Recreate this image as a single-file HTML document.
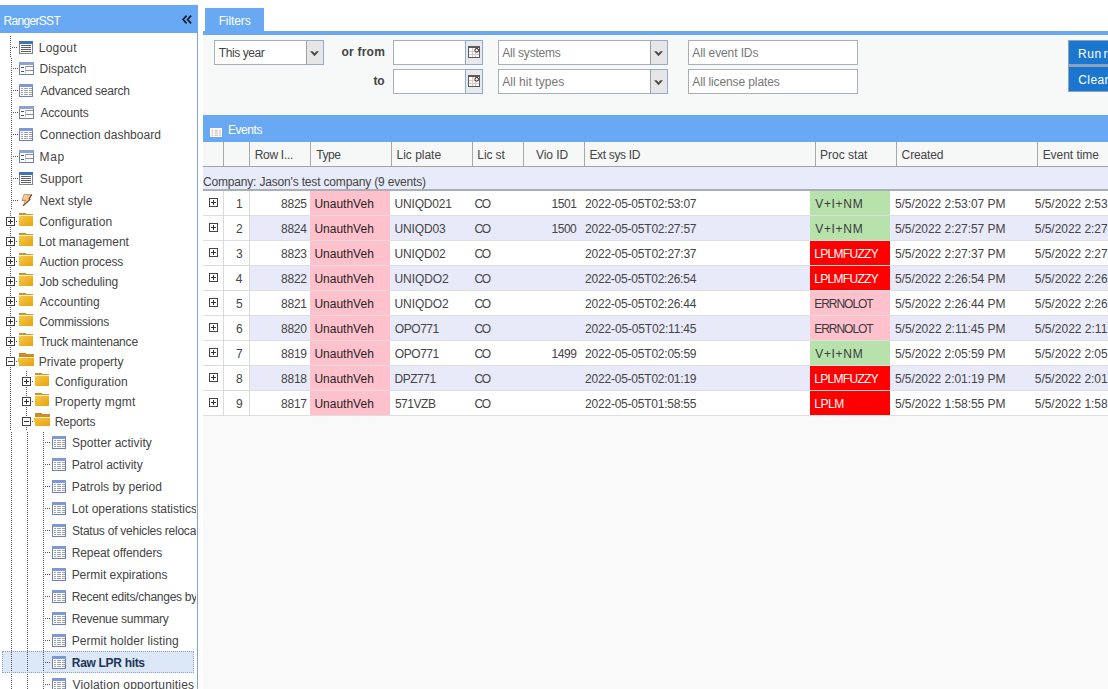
<!DOCTYPE html>
<html><head><meta charset="utf-8"><title>RangerSST</title>
<style>
html,body{margin:0;padding:0;width:1108px;height:689px;overflow:hidden;background:#fff;font-family:"Liberation Sans",sans-serif;}
#root{position:relative;width:1108px;height:689px;overflow:hidden;}
#tree{position:absolute;left:0;top:0;width:196px;height:689px;overflow:hidden;}
</style></head><body><div id="root">
<div style="position:absolute;left:0px;top:5px;width:198px;height:28px;background:#69a9f4"></div><svg style="position:absolute;left:182px;top:15px" width="10" height="9" viewBox="0 0 10 9"><path d="M4.6 0.7L1.1 4.5L4.6 8.3M9.1 0.7L5.6 4.5L9.1 8.3" stroke="#0b1830" stroke-width="1.7" fill="none"/></svg><div style="position:absolute;left:197px;top:33px;width:1px;height:656px;background:#7ea4d8"></div>
<div id="tree"><div style="position:absolute;left:10px;top:36px;width:1px;height:22px;background:repeating-linear-gradient(to bottom,#585858 0 1px,transparent 1px 2px);background-position:0 0px"></div><div style="position:absolute;left:11px;top:58px;width:1px;height:152px;background:repeating-linear-gradient(to bottom,#585858 0 1px,transparent 1px 2px);background-position:0 0px"></div><div style="position:absolute;left:12px;top:47px;width:5px;height:1px;background:repeating-linear-gradient(to right,#585858 0 1px,transparent 1px 2px)"></div><div style="position:absolute;left:19px;top:41px;line-height:0"><svg width="14" height="13" viewBox="0 0 14 13" shape-rendering="crispEdges"><rect x="0.5" y="0.5" width="13" height="12" fill="#fff" stroke="#7b8290"/><rect x="0" y="0" width="14" height="3" fill="#3f74bb"/><path d="M2 4.5h10M2 6.5h10M2 8.5h10M2 10.5h10" stroke="#5e5e5e" stroke-width="1"/></svg></div><div style="position:absolute;left:13px;top:68px;width:5px;height:1px;background:repeating-linear-gradient(to right,#585858 0 1px,transparent 1px 2px)"></div><div style="position:absolute;left:19px;top:62px;line-height:0"><svg width="15" height="13" viewBox="0 0 15 13" shape-rendering="crispEdges"><rect x="0.5" y="0.5" width="14" height="12" fill="#fff" stroke="#6d7fa3"/><rect x="0" y="0" width="15" height="3" fill="#8aa3d4"/><rect x="8" y="5" width="6" height="3" fill="#fdfbee"/><rect x="2" y="5" width="3" height="1" fill="#3f5687"/><rect x="2" y="9" width="3" height="1" fill="#3f5687"/><path d="M6.5 4v7" stroke="#b4bccb"/><path d="M7 4.5h7M7 8.5h7" stroke="#8f949c"/></svg></div><div style="position:absolute;left:13px;top:90px;width:5px;height:1px;background:repeating-linear-gradient(to right,#585858 0 1px,transparent 1px 2px)"></div><div style="position:absolute;left:19px;top:84px;line-height:0"><svg width="14" height="13" viewBox="0 0 14 13" shape-rendering="crispEdges"><rect x="0.5" y="0.5" width="13" height="12" fill="#fff" stroke="#6b7fbf"/><rect x="0" y="0" width="14" height="3" fill="#7c98d8"/><path d="M2 4.5h2M5 4.5h4M10 4.5h3M2 6.5h2M5 6.5h4M10 6.5h3M2 8.5h2M5 8.5h4M10 8.5h3M2 10.5h2M5 10.5h4M10 10.5h3" stroke="#9ea3ab" stroke-width="1"/></svg></div><div style="position:absolute;left:13px;top:112px;width:5px;height:1px;background:repeating-linear-gradient(to right,#585858 0 1px,transparent 1px 2px)"></div><div style="position:absolute;left:19px;top:106px;line-height:0"><svg width="15" height="13" viewBox="0 0 15 13" shape-rendering="crispEdges"><rect x="0.5" y="0.5" width="14" height="12" fill="#fff" stroke="#6d7fa3"/><rect x="0" y="0" width="15" height="3" fill="#8aa3d4"/><rect x="8" y="5" width="6" height="3" fill="#fdfbee"/><rect x="2" y="5" width="3" height="1" fill="#3f5687"/><rect x="2" y="9" width="3" height="1" fill="#3f5687"/><path d="M6.5 4v7" stroke="#b4bccb"/><path d="M7 4.5h7M7 8.5h7" stroke="#8f949c"/></svg></div><div style="position:absolute;left:13px;top:134px;width:5px;height:1px;background:repeating-linear-gradient(to right,#585858 0 1px,transparent 1px 2px)"></div><div style="position:absolute;left:19px;top:128px;line-height:0"><svg width="14" height="13" viewBox="0 0 14 13" shape-rendering="crispEdges"><rect x="0.5" y="0.5" width="13" height="12" fill="#fff" stroke="#6b7fbf"/><rect x="0" y="0" width="14" height="3" fill="#7c98d8"/><path d="M2 4.5h2M5 4.5h4M10 4.5h3M2 6.5h2M5 6.5h4M10 6.5h3M2 8.5h2M5 8.5h4M10 8.5h3M2 10.5h2M5 10.5h4M10 10.5h3" stroke="#9ea3ab" stroke-width="1"/></svg></div><div style="position:absolute;left:13px;top:156px;width:5px;height:1px;background:repeating-linear-gradient(to right,#585858 0 1px,transparent 1px 2px)"></div><div style="position:absolute;left:19px;top:150px;line-height:0"><svg width="15" height="13" viewBox="0 0 15 13" shape-rendering="crispEdges"><rect x="0.5" y="0.5" width="14" height="12" fill="#fff" stroke="#6d7fa3"/><rect x="0" y="0" width="15" height="3" fill="#8aa3d4"/><rect x="8" y="5" width="6" height="3" fill="#fdfbee"/><rect x="2" y="5" width="3" height="1" fill="#3f5687"/><rect x="2" y="9" width="3" height="1" fill="#3f5687"/><path d="M6.5 4v7" stroke="#b4bccb"/><path d="M7 4.5h7M7 8.5h7" stroke="#8f949c"/></svg></div><div style="position:absolute;left:13px;top:178px;width:5px;height:1px;background:repeating-linear-gradient(to right,#585858 0 1px,transparent 1px 2px)"></div><div style="position:absolute;left:19px;top:172px;line-height:0"><svg width="14" height="13" viewBox="0 0 14 13" shape-rendering="crispEdges"><rect x="0.5" y="0.5" width="13" height="12" fill="#fff" stroke="#7b8290"/><rect x="0" y="0" width="14" height="3" fill="#3f74bb"/><path d="M2 4.5h10M2 6.5h10M2 8.5h10M2 10.5h10" stroke="#5e5e5e" stroke-width="1"/></svg></div><div style="position:absolute;left:13px;top:200px;width:5px;height:1px;background:repeating-linear-gradient(to right,#585858 0 1px,transparent 1px 2px)"></div><div style="position:absolute;left:18px;top:191px;line-height:0"><svg width="18" height="18" viewBox="0 0 18 18"><defs><linearGradient id="bg1" x1="0" y1="0" x2="1" y2="1"><stop offset="0" stop-color="#fbe2a6"/><stop offset="1" stop-color="#eea064"/></linearGradient></defs><path d="M6 3.6L13.8 3.6L10.9 8.1L12.3 8.1L5.2 14.8L7.4 9.5L3.9 9.5Z" fill="url(#bg1)" stroke="#b07448" stroke-width="0.7" stroke-linejoin="round"/><path d="M13.8 3.6L10.9 8.1M12.3 8.1L5.2 14.8" stroke="#6a4a38" stroke-width="1.1"/><path d="M4 9.3h3.6" stroke="#c08838" stroke-width="1"/></svg></div><div style="position:absolute;left:10px;top:211px;width:1px;height:220px;background:repeating-linear-gradient(to bottom,#585858 0 1px,transparent 1px 2px);background-position:0 0px"></div><div style="position:absolute;left:6px;top:217px;line-height:0"><svg width="9" height="9" viewBox="0 0 9 9" shape-rendering="crispEdges"><rect x="0.5" y="0.5" width="8" height="8" fill="#fff" stroke="#444"/><path d="M2 4.5h5M4.5 2v5" stroke="#333" stroke-width="1"/></svg></div><div style="position:absolute;left:16px;top:221px;width:1px;height:1px;background:repeating-linear-gradient(to right,#585858 0 1px,transparent 1px 2px)"></div><div style="position:absolute;left:19px;top:213px;line-height:0"><svg width="14" height="13" viewBox="0 0 14 13" shape-rendering="crispEdges"><defs><linearGradient id="fg" x1="0" y1="0" x2="1" y2="1"><stop offset="0" stop-color="#f4c84a"/><stop offset="1" stop-color="#e8a40c"/></linearGradient></defs><rect x="0" y="0" width="7" height="1" fill="#c18c2e"/><rect x="0" y="1" width="14" height="1" fill="#c89a40"/><rect x="0" y="2" width="14" height="1" fill="#fdf3b8"/><rect x="0" y="3" width="14" height="10" fill="url(#fg)"/></svg></div><div style="position:absolute;left:6px;top:237px;line-height:0"><svg width="9" height="9" viewBox="0 0 9 9" shape-rendering="crispEdges"><rect x="0.5" y="0.5" width="8" height="8" fill="#fff" stroke="#444"/><path d="M2 4.5h5M4.5 2v5" stroke="#333" stroke-width="1"/></svg></div><div style="position:absolute;left:16px;top:241px;width:1px;height:1px;background:repeating-linear-gradient(to right,#585858 0 1px,transparent 1px 2px)"></div><div style="position:absolute;left:19px;top:233px;line-height:0"><svg width="14" height="13" viewBox="0 0 14 13" shape-rendering="crispEdges"><defs><linearGradient id="fg" x1="0" y1="0" x2="1" y2="1"><stop offset="0" stop-color="#f4c84a"/><stop offset="1" stop-color="#e8a40c"/></linearGradient></defs><rect x="0" y="0" width="7" height="1" fill="#c18c2e"/><rect x="0" y="1" width="14" height="1" fill="#c89a40"/><rect x="0" y="2" width="14" height="1" fill="#fdf3b8"/><rect x="0" y="3" width="14" height="10" fill="url(#fg)"/></svg></div><div style="position:absolute;left:6px;top:257px;line-height:0"><svg width="9" height="9" viewBox="0 0 9 9" shape-rendering="crispEdges"><rect x="0.5" y="0.5" width="8" height="8" fill="#fff" stroke="#444"/><path d="M2 4.5h5M4.5 2v5" stroke="#333" stroke-width="1"/></svg></div><div style="position:absolute;left:16px;top:261px;width:1px;height:1px;background:repeating-linear-gradient(to right,#585858 0 1px,transparent 1px 2px)"></div><div style="position:absolute;left:19px;top:253px;line-height:0"><svg width="14" height="13" viewBox="0 0 14 13" shape-rendering="crispEdges"><defs><linearGradient id="fg" x1="0" y1="0" x2="1" y2="1"><stop offset="0" stop-color="#f4c84a"/><stop offset="1" stop-color="#e8a40c"/></linearGradient></defs><rect x="0" y="0" width="7" height="1" fill="#c18c2e"/><rect x="0" y="1" width="14" height="1" fill="#c89a40"/><rect x="0" y="2" width="14" height="1" fill="#fdf3b8"/><rect x="0" y="3" width="14" height="10" fill="url(#fg)"/></svg></div><div style="position:absolute;left:6px;top:277px;line-height:0"><svg width="9" height="9" viewBox="0 0 9 9" shape-rendering="crispEdges"><rect x="0.5" y="0.5" width="8" height="8" fill="#fff" stroke="#444"/><path d="M2 4.5h5M4.5 2v5" stroke="#333" stroke-width="1"/></svg></div><div style="position:absolute;left:16px;top:281px;width:1px;height:1px;background:repeating-linear-gradient(to right,#585858 0 1px,transparent 1px 2px)"></div><div style="position:absolute;left:19px;top:273px;line-height:0"><svg width="14" height="13" viewBox="0 0 14 13" shape-rendering="crispEdges"><defs><linearGradient id="fg" x1="0" y1="0" x2="1" y2="1"><stop offset="0" stop-color="#f4c84a"/><stop offset="1" stop-color="#e8a40c"/></linearGradient></defs><rect x="0" y="0" width="7" height="1" fill="#c18c2e"/><rect x="0" y="1" width="14" height="1" fill="#c89a40"/><rect x="0" y="2" width="14" height="1" fill="#fdf3b8"/><rect x="0" y="3" width="14" height="10" fill="url(#fg)"/></svg></div><div style="position:absolute;left:6px;top:297px;line-height:0"><svg width="9" height="9" viewBox="0 0 9 9" shape-rendering="crispEdges"><rect x="0.5" y="0.5" width="8" height="8" fill="#fff" stroke="#444"/><path d="M2 4.5h5M4.5 2v5" stroke="#333" stroke-width="1"/></svg></div><div style="position:absolute;left:16px;top:301px;width:1px;height:1px;background:repeating-linear-gradient(to right,#585858 0 1px,transparent 1px 2px)"></div><div style="position:absolute;left:19px;top:293px;line-height:0"><svg width="14" height="13" viewBox="0 0 14 13" shape-rendering="crispEdges"><defs><linearGradient id="fg" x1="0" y1="0" x2="1" y2="1"><stop offset="0" stop-color="#f4c84a"/><stop offset="1" stop-color="#e8a40c"/></linearGradient></defs><rect x="0" y="0" width="7" height="1" fill="#c18c2e"/><rect x="0" y="1" width="14" height="1" fill="#c89a40"/><rect x="0" y="2" width="14" height="1" fill="#fdf3b8"/><rect x="0" y="3" width="14" height="10" fill="url(#fg)"/></svg></div><div style="position:absolute;left:6px;top:317px;line-height:0"><svg width="9" height="9" viewBox="0 0 9 9" shape-rendering="crispEdges"><rect x="0.5" y="0.5" width="8" height="8" fill="#fff" stroke="#444"/><path d="M2 4.5h5M4.5 2v5" stroke="#333" stroke-width="1"/></svg></div><div style="position:absolute;left:16px;top:321px;width:1px;height:1px;background:repeating-linear-gradient(to right,#585858 0 1px,transparent 1px 2px)"></div><div style="position:absolute;left:19px;top:313px;line-height:0"><svg width="14" height="13" viewBox="0 0 14 13" shape-rendering="crispEdges"><defs><linearGradient id="fg" x1="0" y1="0" x2="1" y2="1"><stop offset="0" stop-color="#f4c84a"/><stop offset="1" stop-color="#e8a40c"/></linearGradient></defs><rect x="0" y="0" width="7" height="1" fill="#c18c2e"/><rect x="0" y="1" width="14" height="1" fill="#c89a40"/><rect x="0" y="2" width="14" height="1" fill="#fdf3b8"/><rect x="0" y="3" width="14" height="10" fill="url(#fg)"/></svg></div><div style="position:absolute;left:6px;top:337px;line-height:0"><svg width="9" height="9" viewBox="0 0 9 9" shape-rendering="crispEdges"><rect x="0.5" y="0.5" width="8" height="8" fill="#fff" stroke="#444"/><path d="M2 4.5h5M4.5 2v5" stroke="#333" stroke-width="1"/></svg></div><div style="position:absolute;left:16px;top:341px;width:1px;height:1px;background:repeating-linear-gradient(to right,#585858 0 1px,transparent 1px 2px)"></div><div style="position:absolute;left:19px;top:333px;line-height:0"><svg width="14" height="13" viewBox="0 0 14 13" shape-rendering="crispEdges"><defs><linearGradient id="fg" x1="0" y1="0" x2="1" y2="1"><stop offset="0" stop-color="#f4c84a"/><stop offset="1" stop-color="#e8a40c"/></linearGradient></defs><rect x="0" y="0" width="7" height="1" fill="#c18c2e"/><rect x="0" y="1" width="14" height="1" fill="#c89a40"/><rect x="0" y="2" width="14" height="1" fill="#fdf3b8"/><rect x="0" y="3" width="14" height="10" fill="url(#fg)"/></svg></div><div style="position:absolute;left:6px;top:357px;line-height:0"><svg width="9" height="9" viewBox="0 0 9 9" shape-rendering="crispEdges"><rect x="0.5" y="0.5" width="8" height="8" fill="#fff" stroke="#444"/><path d="M2 4.5h5" stroke="#333" stroke-width="1"/></svg></div><div style="position:absolute;left:16px;top:361px;width:1px;height:1px;background:repeating-linear-gradient(to right,#585858 0 1px,transparent 1px 2px)"></div><div style="position:absolute;left:18px;top:353px;line-height:0"><svg width="16" height="13" viewBox="0 0 16 13" shape-rendering="crispEdges"><defs><linearGradient id="og" x1="0" y1="0" x2="1" y2="1"><stop offset="0" stop-color="#f5c640"/><stop offset="1" stop-color="#e9a010"/></linearGradient></defs><rect x="1" y="0" width="7" height="1" fill="#c58528"/><rect x="1" y="1" width="15" height="3" fill="#cd8d2c"/><rect x="1" y="4" width="15" height="1" fill="#fdf3b8"/><path d="M0 5h16v8H1z" fill="url(#og)"/></svg></div><div style="position:absolute;left:26px;top:371px;width:1px;height:60px;background:repeating-linear-gradient(to bottom,#585858 0 1px,transparent 1px 2px);background-position:0 0px"></div><div style="position:absolute;left:22px;top:377px;line-height:0"><svg width="9" height="9" viewBox="0 0 9 9" shape-rendering="crispEdges"><rect x="0.5" y="0.5" width="8" height="8" fill="#fff" stroke="#444"/><path d="M2 4.5h5M4.5 2v5" stroke="#333" stroke-width="1"/></svg></div><div style="position:absolute;left:32px;top:381px;width:1px;height:1px;background:repeating-linear-gradient(to right,#585858 0 1px,transparent 1px 2px)"></div><div style="position:absolute;left:35px;top:373px;line-height:0"><svg width="14" height="13" viewBox="0 0 14 13" shape-rendering="crispEdges"><defs><linearGradient id="fg" x1="0" y1="0" x2="1" y2="1"><stop offset="0" stop-color="#f4c84a"/><stop offset="1" stop-color="#e8a40c"/></linearGradient></defs><rect x="0" y="0" width="7" height="1" fill="#c18c2e"/><rect x="0" y="1" width="14" height="1" fill="#c89a40"/><rect x="0" y="2" width="14" height="1" fill="#fdf3b8"/><rect x="0" y="3" width="14" height="10" fill="url(#fg)"/></svg></div><div style="position:absolute;left:22px;top:397px;line-height:0"><svg width="9" height="9" viewBox="0 0 9 9" shape-rendering="crispEdges"><rect x="0.5" y="0.5" width="8" height="8" fill="#fff" stroke="#444"/><path d="M2 4.5h5M4.5 2v5" stroke="#333" stroke-width="1"/></svg></div><div style="position:absolute;left:32px;top:401px;width:1px;height:1px;background:repeating-linear-gradient(to right,#585858 0 1px,transparent 1px 2px)"></div><div style="position:absolute;left:35px;top:393px;line-height:0"><svg width="14" height="13" viewBox="0 0 14 13" shape-rendering="crispEdges"><defs><linearGradient id="fg" x1="0" y1="0" x2="1" y2="1"><stop offset="0" stop-color="#f4c84a"/><stop offset="1" stop-color="#e8a40c"/></linearGradient></defs><rect x="0" y="0" width="7" height="1" fill="#c18c2e"/><rect x="0" y="1" width="14" height="1" fill="#c89a40"/><rect x="0" y="2" width="14" height="1" fill="#fdf3b8"/><rect x="0" y="3" width="14" height="10" fill="url(#fg)"/></svg></div><div style="position:absolute;left:22px;top:417px;line-height:0"><svg width="9" height="9" viewBox="0 0 9 9" shape-rendering="crispEdges"><rect x="0.5" y="0.5" width="8" height="8" fill="#fff" stroke="#444"/><path d="M2 4.5h5" stroke="#333" stroke-width="1"/></svg></div><div style="position:absolute;left:32px;top:421px;width:1px;height:1px;background:repeating-linear-gradient(to right,#585858 0 1px,transparent 1px 2px)"></div><div style="position:absolute;left:34px;top:413px;line-height:0"><svg width="16" height="13" viewBox="0 0 16 13" shape-rendering="crispEdges"><defs><linearGradient id="og" x1="0" y1="0" x2="1" y2="1"><stop offset="0" stop-color="#f5c640"/><stop offset="1" stop-color="#e9a010"/></linearGradient></defs><rect x="1" y="0" width="7" height="1" fill="#c58528"/><rect x="1" y="1" width="15" height="3" fill="#cd8d2c"/><rect x="1" y="4" width="15" height="1" fill="#fdf3b8"/><path d="M0 5h16v8H1z" fill="url(#og)"/></svg></div><div style="position:absolute;left:11px;top:432px;width:1px;height:257px;background:repeating-linear-gradient(to bottom,#585858 0 1px,transparent 1px 2px);background-position:0 0px"></div><div style="position:absolute;left:27px;top:432px;width:1px;height:257px;background:repeating-linear-gradient(to bottom,#585858 0 1px,transparent 1px 2px);background-position:0 0px"></div><div style="position:absolute;left:43px;top:432px;width:1px;height:257px;background:repeating-linear-gradient(to bottom,#585858 0 1px,transparent 1px 2px);background-position:0 0px"></div><div style="position:absolute;left:45px;top:442px;width:6px;height:1px;background:repeating-linear-gradient(to right,#585858 0 1px,transparent 1px 2px)"></div><div style="position:absolute;left:52px;top:436px;line-height:0"><svg width="14" height="13" viewBox="0 0 14 13" shape-rendering="crispEdges"><rect x="0.5" y="0.5" width="13" height="12" fill="#fff" stroke="#6b7fbf"/><rect x="0" y="0" width="14" height="3" fill="#7c98d8"/><path d="M2 4.5h2M5 4.5h4M10 4.5h3M2 6.5h2M5 6.5h4M10 6.5h3M2 8.5h2M5 8.5h4M10 8.5h3M2 10.5h2M5 10.5h4M10 10.5h3" stroke="#9ea3ab" stroke-width="1"/></svg></div><div style="position:absolute;left:45px;top:464px;width:6px;height:1px;background:repeating-linear-gradient(to right,#585858 0 1px,transparent 1px 2px)"></div><div style="position:absolute;left:52px;top:458px;line-height:0"><svg width="14" height="13" viewBox="0 0 14 13" shape-rendering="crispEdges"><rect x="0.5" y="0.5" width="13" height="12" fill="#fff" stroke="#6b7fbf"/><rect x="0" y="0" width="14" height="3" fill="#7c98d8"/><path d="M2 4.5h2M5 4.5h4M10 4.5h3M2 6.5h2M5 6.5h4M10 6.5h3M2 8.5h2M5 8.5h4M10 8.5h3M2 10.5h2M5 10.5h4M10 10.5h3" stroke="#9ea3ab" stroke-width="1"/></svg></div><div style="position:absolute;left:45px;top:486px;width:6px;height:1px;background:repeating-linear-gradient(to right,#585858 0 1px,transparent 1px 2px)"></div><div style="position:absolute;left:52px;top:480px;line-height:0"><svg width="14" height="13" viewBox="0 0 14 13" shape-rendering="crispEdges"><rect x="0.5" y="0.5" width="13" height="12" fill="#fff" stroke="#6b7fbf"/><rect x="0" y="0" width="14" height="3" fill="#7c98d8"/><path d="M2 4.5h2M5 4.5h4M10 4.5h3M2 6.5h2M5 6.5h4M10 6.5h3M2 8.5h2M5 8.5h4M10 8.5h3M2 10.5h2M5 10.5h4M10 10.5h3" stroke="#9ea3ab" stroke-width="1"/></svg></div><div style="position:absolute;left:45px;top:508px;width:6px;height:1px;background:repeating-linear-gradient(to right,#585858 0 1px,transparent 1px 2px)"></div><div style="position:absolute;left:52px;top:502px;line-height:0"><svg width="14" height="13" viewBox="0 0 14 13" shape-rendering="crispEdges"><rect x="0.5" y="0.5" width="13" height="12" fill="#fff" stroke="#6b7fbf"/><rect x="0" y="0" width="14" height="3" fill="#7c98d8"/><path d="M2 4.5h2M5 4.5h4M10 4.5h3M2 6.5h2M5 6.5h4M10 6.5h3M2 8.5h2M5 8.5h4M10 8.5h3M2 10.5h2M5 10.5h4M10 10.5h3" stroke="#9ea3ab" stroke-width="1"/></svg></div><div style="position:absolute;left:45px;top:530px;width:6px;height:1px;background:repeating-linear-gradient(to right,#585858 0 1px,transparent 1px 2px)"></div><div style="position:absolute;left:52px;top:524px;line-height:0"><svg width="14" height="13" viewBox="0 0 14 13" shape-rendering="crispEdges"><rect x="0.5" y="0.5" width="13" height="12" fill="#fff" stroke="#6b7fbf"/><rect x="0" y="0" width="14" height="3" fill="#7c98d8"/><path d="M2 4.5h2M5 4.5h4M10 4.5h3M2 6.5h2M5 6.5h4M10 6.5h3M2 8.5h2M5 8.5h4M10 8.5h3M2 10.5h2M5 10.5h4M10 10.5h3" stroke="#9ea3ab" stroke-width="1"/></svg></div><div style="position:absolute;left:45px;top:552px;width:6px;height:1px;background:repeating-linear-gradient(to right,#585858 0 1px,transparent 1px 2px)"></div><div style="position:absolute;left:52px;top:546px;line-height:0"><svg width="14" height="13" viewBox="0 0 14 13" shape-rendering="crispEdges"><rect x="0.5" y="0.5" width="13" height="12" fill="#fff" stroke="#6b7fbf"/><rect x="0" y="0" width="14" height="3" fill="#7c98d8"/><path d="M2 4.5h2M5 4.5h4M10 4.5h3M2 6.5h2M5 6.5h4M10 6.5h3M2 8.5h2M5 8.5h4M10 8.5h3M2 10.5h2M5 10.5h4M10 10.5h3" stroke="#9ea3ab" stroke-width="1"/></svg></div><div style="position:absolute;left:45px;top:574px;width:6px;height:1px;background:repeating-linear-gradient(to right,#585858 0 1px,transparent 1px 2px)"></div><div style="position:absolute;left:52px;top:568px;line-height:0"><svg width="14" height="13" viewBox="0 0 14 13" shape-rendering="crispEdges"><rect x="0.5" y="0.5" width="13" height="12" fill="#fff" stroke="#6b7fbf"/><rect x="0" y="0" width="14" height="3" fill="#7c98d8"/><path d="M2 4.5h2M5 4.5h4M10 4.5h3M2 6.5h2M5 6.5h4M10 6.5h3M2 8.5h2M5 8.5h4M10 8.5h3M2 10.5h2M5 10.5h4M10 10.5h3" stroke="#9ea3ab" stroke-width="1"/></svg></div><div style="position:absolute;left:45px;top:596px;width:6px;height:1px;background:repeating-linear-gradient(to right,#585858 0 1px,transparent 1px 2px)"></div><div style="position:absolute;left:52px;top:590px;line-height:0"><svg width="14" height="13" viewBox="0 0 14 13" shape-rendering="crispEdges"><rect x="0.5" y="0.5" width="13" height="12" fill="#fff" stroke="#6b7fbf"/><rect x="0" y="0" width="14" height="3" fill="#7c98d8"/><path d="M2 4.5h2M5 4.5h4M10 4.5h3M2 6.5h2M5 6.5h4M10 6.5h3M2 8.5h2M5 8.5h4M10 8.5h3M2 10.5h2M5 10.5h4M10 10.5h3" stroke="#9ea3ab" stroke-width="1"/></svg></div><div style="position:absolute;left:45px;top:618px;width:6px;height:1px;background:repeating-linear-gradient(to right,#585858 0 1px,transparent 1px 2px)"></div><div style="position:absolute;left:52px;top:612px;line-height:0"><svg width="14" height="13" viewBox="0 0 14 13" shape-rendering="crispEdges"><rect x="0.5" y="0.5" width="13" height="12" fill="#fff" stroke="#6b7fbf"/><rect x="0" y="0" width="14" height="3" fill="#7c98d8"/><path d="M2 4.5h2M5 4.5h4M10 4.5h3M2 6.5h2M5 6.5h4M10 6.5h3M2 8.5h2M5 8.5h4M10 8.5h3M2 10.5h2M5 10.5h4M10 10.5h3" stroke="#9ea3ab" stroke-width="1"/></svg></div><div style="position:absolute;left:45px;top:640px;width:6px;height:1px;background:repeating-linear-gradient(to right,#585858 0 1px,transparent 1px 2px)"></div><div style="position:absolute;left:52px;top:634px;line-height:0"><svg width="14" height="13" viewBox="0 0 14 13" shape-rendering="crispEdges"><rect x="0.5" y="0.5" width="13" height="12" fill="#fff" stroke="#6b7fbf"/><rect x="0" y="0" width="14" height="3" fill="#7c98d8"/><path d="M2 4.5h2M5 4.5h4M10 4.5h3M2 6.5h2M5 6.5h4M10 6.5h3M2 8.5h2M5 8.5h4M10 8.5h3M2 10.5h2M5 10.5h4M10 10.5h3" stroke="#9ea3ab" stroke-width="1"/></svg></div><div style="position:absolute;left:2px;top:651px;width:192px;height:22px;background:#dce7f7;box-sizing:border-box;border:1px dotted #8c9fbc"></div><div style="position:absolute;left:11px;top:652px;width:1px;height:20px;background:repeating-linear-gradient(to bottom,#585858 0 1px,transparent 1px 2px);background-position:0 0px"></div><div style="position:absolute;left:27px;top:652px;width:1px;height:20px;background:repeating-linear-gradient(to bottom,#585858 0 1px,transparent 1px 2px);background-position:0 0px"></div><div style="position:absolute;left:43px;top:652px;width:1px;height:20px;background:repeating-linear-gradient(to bottom,#585858 0 1px,transparent 1px 2px);background-position:0 0px"></div><div style="position:absolute;left:45px;top:662px;width:6px;height:1px;background:repeating-linear-gradient(to right,#585858 0 1px,transparent 1px 2px)"></div><div style="position:absolute;left:52px;top:656px;line-height:0"><svg width="14" height="13" viewBox="0 0 14 13" shape-rendering="crispEdges"><rect x="0.5" y="0.5" width="13" height="12" fill="#fff" stroke="#6b7fbf"/><rect x="0" y="0" width="14" height="3" fill="#7c98d8"/><path d="M2 4.5h2M5 4.5h4M10 4.5h3M2 6.5h2M5 6.5h4M10 6.5h3M2 8.5h2M5 8.5h4M10 8.5h3M2 10.5h2M5 10.5h4M10 10.5h3" stroke="#9ea3ab" stroke-width="1"/></svg></div><div style="position:absolute;left:45px;top:684px;width:6px;height:1px;background:repeating-linear-gradient(to right,#585858 0 1px,transparent 1px 2px)"></div><div style="position:absolute;left:52px;top:678px;line-height:0"><svg width="14" height="13" viewBox="0 0 14 13" shape-rendering="crispEdges"><rect x="0.5" y="0.5" width="13" height="12" fill="#fff" stroke="#6b7fbf"/><rect x="0" y="0" width="14" height="3" fill="#7c98d8"/><path d="M2 4.5h2M5 4.5h4M10 4.5h3M2 6.5h2M5 6.5h4M10 6.5h3M2 8.5h2M5 8.5h4M10 8.5h3M2 10.5h2M5 10.5h4M10 10.5h3" stroke="#9ea3ab" stroke-width="1"/></svg></div><span style="position:absolute;left:38.84px;top:40.00px;font-size:12px;line-height:16px;font-weight:400;color:#444;letter-spacing:0.198px;white-space:pre">Logout</span><span style="position:absolute;left:39.54px;top:60.80px;font-size:12px;line-height:16px;font-weight:400;color:#444;letter-spacing:0.015px;white-space:pre">Dispatch</span><span style="position:absolute;left:40.50px;top:82.60px;font-size:12px;line-height:16px;font-weight:400;color:#444;letter-spacing:-0.235px;white-space:pre">Advanced search</span><span style="position:absolute;left:40.40px;top:104.60px;font-size:12px;line-height:16px;font-weight:400;color:#444;letter-spacing:-0.148px;white-space:pre">Accounts</span><span style="position:absolute;left:39.80px;top:126.60px;font-size:12px;line-height:16px;font-weight:400;color:#444;letter-spacing:0.015px;white-space:pre">Connection dashboard</span><span style="position:absolute;left:39.44px;top:148.70px;font-size:12px;line-height:16px;font-weight:400;color:#444;letter-spacing:0.755px;white-space:pre">Map</span><span style="position:absolute;left:39.86px;top:170.70px;font-size:12px;line-height:16px;font-weight:400;color:#444;letter-spacing:0.091px;white-space:pre">Support</span><span style="position:absolute;left:39.44px;top:192.70px;font-size:12px;line-height:16px;font-weight:400;color:#444;letter-spacing:0.041px;white-space:pre">Next style</span><span style="position:absolute;left:39.20px;top:213.70px;font-size:12px;line-height:16px;font-weight:400;color:#444;letter-spacing:0.130px;white-space:pre">Configuration</span><span style="position:absolute;left:38.84px;top:233.70px;font-size:12px;line-height:16px;font-weight:400;color:#444;letter-spacing:0.003px;white-space:pre">Lot management</span><span style="position:absolute;left:39.80px;top:253.70px;font-size:12px;line-height:16px;font-weight:400;color:#444;letter-spacing:-0.133px;white-space:pre">Auction process</span><span style="position:absolute;left:39.62px;top:273.70px;font-size:12px;line-height:16px;font-weight:400;color:#444;letter-spacing:-0.119px;white-space:pre">Job scheduling</span><span style="position:absolute;left:39.80px;top:293.70px;font-size:12px;line-height:16px;font-weight:400;color:#444;letter-spacing:0.051px;white-space:pre">Accounting</span><span style="position:absolute;left:39.20px;top:313.70px;font-size:12px;line-height:16px;font-weight:400;color:#444;letter-spacing:-0.199px;white-space:pre">Commissions</span><span style="position:absolute;left:39.56px;top:333.70px;font-size:12px;line-height:16px;font-weight:400;color:#444;letter-spacing:-0.192px;white-space:pre">Truck maintenance</span><span style="position:absolute;left:38.84px;top:353.70px;font-size:12px;line-height:16px;font-weight:400;color:#444;letter-spacing:-0.010px;white-space:pre">Private property</span><span style="position:absolute;left:55.00px;top:373.70px;font-size:12px;line-height:16px;font-weight:400;color:#444;letter-spacing:0.113px;white-space:pre">Configuration</span><span style="position:absolute;left:54.64px;top:393.70px;font-size:12px;line-height:16px;font-weight:400;color:#444;letter-spacing:0.159px;white-space:pre">Property mgmt</span><span style="position:absolute;left:54.64px;top:413.70px;font-size:12px;line-height:16px;font-weight:400;color:#444;letter-spacing:-0.206px;white-space:pre">Reports</span><span style="position:absolute;left:72.06px;top:434.50px;font-size:12px;line-height:16px;font-weight:400;color:#444;letter-spacing:0.070px;white-space:pre">Spotter activity</span><span style="position:absolute;left:71.64px;top:456.50px;font-size:12px;line-height:16px;font-weight:400;color:#444;letter-spacing:-0.021px;white-space:pre">Patrol activity</span><span style="position:absolute;left:71.64px;top:478.50px;font-size:12px;line-height:16px;font-weight:400;color:#444;letter-spacing:0.015px;white-space:pre">Patrols by period</span><span style="position:absolute;left:71.64px;top:500.50px;font-size:12px;line-height:16px;font-weight:400;color:#444;letter-spacing:0.000px;white-space:pre">Lot operations statistics</span><span style="position:absolute;left:72.06px;top:522.50px;font-size:12px;line-height:16px;font-weight:400;color:#444;letter-spacing:-0.242px;white-space:pre">Status of vehicles relocated</span><span style="position:absolute;left:71.64px;top:544.50px;font-size:12px;line-height:16px;font-weight:400;color:#444;letter-spacing:-0.078px;white-space:pre">Repeat offenders</span><span style="position:absolute;left:71.64px;top:566.50px;font-size:12px;line-height:16px;font-weight:400;color:#444;letter-spacing:-0.015px;white-space:pre">Permit expirations</span><span style="position:absolute;left:71.64px;top:588.50px;font-size:12px;line-height:16px;font-weight:400;color:#444;letter-spacing:-0.262px;white-space:pre">Recent edits/changes by user</span><span style="position:absolute;left:71.64px;top:610.50px;font-size:12px;line-height:16px;font-weight:400;color:#444;letter-spacing:-0.253px;white-space:pre">Revenue summary</span><span style="position:absolute;left:71.64px;top:632.50px;font-size:12px;line-height:16px;font-weight:400;color:#444;letter-spacing:0.081px;white-space:pre">Permit holder listing</span><span style="position:absolute;left:71.82px;top:654.50px;font-size:12px;line-height:16px;font-weight:700;color:#1d3557;letter-spacing:-0.315px;white-space:pre">Raw LPR hits</span><span style="position:absolute;left:72.60px;top:676.50px;font-size:12px;line-height:16px;font-weight:400;color:#444;letter-spacing:0.162px;white-space:pre">Violation opportunities</span></div>
<div style="position:absolute;left:205px;top:8px;width:59px;height:23px;background:#69a9f4"></div><div style="position:absolute;left:203px;top:31px;width:905px;height:4px;background:#69a9f4"></div><div style="position:absolute;left:203px;top:35px;width:905px;height:80px;background:#f7f9f8"></div><div style="position:absolute;left:203px;top:416px;width:905px;height:273px;background:#f9f9f9"></div><div style="position:absolute;left:214px;top:40px;width:110px;height:25px;background:#fff;box-sizing:border-box;border:1px solid #a9afb8"></div><div style="position:absolute;left:306px;top:40px;width:18px;height:25px;background:#e6e6e6;box-sizing:border-box;border:1px solid #95abd0;border-left:1px solid #a0a0a0"></div><div style="position:absolute;left:310px;top:51px;line-height:0"><svg width="9" height="6" viewBox="0 0 9 6"><path d="M0 0.2L2.7 0.2L4.5 2.3L6.3 0.2L9 0.2L4.5 5.2Z" fill="#4d4d4d"/></svg></div><div style="position:absolute;left:393px;top:40px;width:90px;height:25px;background:#fff;box-sizing:border-box;border:1px solid #a9afb8"></div><div style="position:absolute;left:465px;top:40px;width:18px;height:25px;background:#e8e9ea;box-sizing:border-box;border:1px solid #8ea8d2"></div><div style="position:absolute;left:468px;top:46px;line-height:0"><svg width="12" height="12" viewBox="0 0 12 12"><rect x="0" y="0" width="12" height="12" fill="#5a5a5a"/><rect x="1" y="2" width="10" height="9" fill="#fff"/><path d="M1 5.5h10M1 8.5h10M4.5 2v9M7.5 2v9" stroke="#d8c8c8" stroke-width="1"/><circle cx="8.7" cy="4.3" r="1.8" fill="#fff" stroke="#2a0808" stroke-width="1"/></svg></div><div style="position:absolute;left:393px;top:69px;width:90px;height:25px;background:#fff;box-sizing:border-box;border:1px solid #a9afb8"></div><div style="position:absolute;left:465px;top:69px;width:18px;height:25px;background:#e8e9ea;box-sizing:border-box;border:1px solid #8ea8d2"></div><div style="position:absolute;left:468px;top:75px;line-height:0"><svg width="12" height="12" viewBox="0 0 12 12"><rect x="0" y="0" width="12" height="12" fill="#5a5a5a"/><rect x="1" y="2" width="10" height="9" fill="#fff"/><path d="M1 5.5h10M1 8.5h10M4.5 2v9M7.5 2v9" stroke="#d8c8c8" stroke-width="1"/><circle cx="8.7" cy="4.3" r="1.8" fill="#fff" stroke="#2a0808" stroke-width="1"/></svg></div><div style="position:absolute;left:498px;top:40px;width:170px;height:25px;background:#fff;box-sizing:border-box;border:1px solid #a9afb8"></div><div style="position:absolute;left:650px;top:40px;width:18px;height:25px;background:#e6e6e6;box-sizing:border-box;border:1px solid #95abd0;border-left:1px solid #a0a0a0"></div><div style="position:absolute;left:654px;top:51px;line-height:0"><svg width="9" height="6" viewBox="0 0 9 6"><path d="M0 0.2L2.7 0.2L4.5 2.3L6.3 0.2L9 0.2L4.5 5.2Z" fill="#4d4d4d"/></svg></div><div style="position:absolute;left:498px;top:69px;width:170px;height:25px;background:#fff;box-sizing:border-box;border:1px solid #a9afb8"></div><div style="position:absolute;left:650px;top:69px;width:18px;height:25px;background:#e6e6e6;box-sizing:border-box;border:1px solid #95abd0;border-left:1px solid #a0a0a0"></div><div style="position:absolute;left:654px;top:80px;line-height:0"><svg width="9" height="6" viewBox="0 0 9 6"><path d="M0 0.2L2.7 0.2L4.5 2.3L6.3 0.2L9 0.2L4.5 5.2Z" fill="#4d4d4d"/></svg></div><div style="position:absolute;left:688px;top:40px;width:170px;height:25px;background:#fff;box-sizing:border-box;border:1px solid #a9afb8"></div><div style="position:absolute;left:688px;top:69px;width:170px;height:25px;background:#fff;box-sizing:border-box;border:1px solid #a9afb8"></div><div style="position:absolute;left:1068px;top:40px;width:40px;height:52px;background:#8ca2bc"></div><div style="position:absolute;left:1069px;top:41px;width:39px;height:23px;background:#1a76cf"></div><div style="position:absolute;left:1069px;top:67px;width:39px;height:24px;background:#1a76cf"></div><div style="position:absolute;left:203px;top:115px;width:905px;height:27px;background:#69a9f4"></div><div style="position:absolute;left:210px;top:128px;line-height:0"><svg width="12" height="9" viewBox="0 0 13 10" preserveAspectRatio="none"><rect x="0" y="0" width="13" height="10" fill="#fff"/><path d="M1.5 2.5h2M5 2.5h3.5M10 2.5h2M1.5 4.5h2M5 4.5h3.5M10 4.5h2M1.5 6.5h2M5 6.5h3.5M10 6.5h2M1.5 8.5h2M5 8.5h3.5M10 8.5h2" stroke="#d4b0b0" stroke-width="1"/></svg></div><div style="position:absolute;left:203px;top:142px;width:905px;height:24px;background:#f6f7f7"></div><div style="position:absolute;left:203px;top:166px;width:905px;height:1px;background:#a3a3a3"></div><div style="position:absolute;left:223px;top:142px;width:1px;height:24px;background:#a8a8a8"></div><div style="position:absolute;left:249px;top:142px;width:1px;height:24px;background:#a8a8a8"></div><div style="position:absolute;left:310px;top:142px;width:1px;height:24px;background:#a8a8a8"></div><div style="position:absolute;left:391px;top:142px;width:1px;height:24px;background:#a8a8a8"></div><div style="position:absolute;left:472px;top:142px;width:1px;height:24px;background:#a8a8a8"></div><div style="position:absolute;left:523px;top:142px;width:1px;height:24px;background:#a8a8a8"></div><div style="position:absolute;left:584px;top:142px;width:1px;height:24px;background:#a8a8a8"></div><div style="position:absolute;left:815px;top:142px;width:1px;height:24px;background:#a8a8a8"></div><div style="position:absolute;left:896px;top:142px;width:1px;height:24px;background:#a8a8a8"></div><div style="position:absolute;left:1037px;top:142px;width:1px;height:24px;background:#a8a8a8"></div><div style="position:absolute;left:203px;top:167px;width:905px;height:22px;background:#e8ebfa"></div><div style="position:absolute;left:203px;top:189px;width:905px;height:2px;background:#aaaeb6"></div><div style="position:absolute;left:203px;top:191px;width:905px;height:25px;background:#fff"></div><div style="position:absolute;left:310px;top:191px;width:80px;height:25px;background:#ffc1cc"></div><div style="position:absolute;left:810px;top:191px;width:80px;height:25px;background:#b8e2ac"></div><div style="position:absolute;left:203px;top:215px;width:905px;height:1px;background:#dedede"></div><div style="position:absolute;left:209px;top:198px;line-height:0"><svg width="9" height="9" viewBox="0 0 9 9" shape-rendering="crispEdges"><rect x="0.5" y="0.5" width="8" height="8" fill="#fff" stroke="#444"/><path d="M2 4.5h5M4.5 2v5" stroke="#333" stroke-width="1"/></svg></div><div style="position:absolute;left:203px;top:216px;width:905px;height:25px;background:#fff"></div><div style="position:absolute;left:249px;top:216px;width:859px;height:25px;background:#e9eaf9"></div><div style="position:absolute;left:310px;top:216px;width:80px;height:25px;background:#ffc1cc"></div><div style="position:absolute;left:810px;top:216px;width:80px;height:25px;background:#b8e2ac"></div><div style="position:absolute;left:203px;top:240px;width:905px;height:1px;background:#dedede"></div><div style="position:absolute;left:209px;top:223px;line-height:0"><svg width="9" height="9" viewBox="0 0 9 9" shape-rendering="crispEdges"><rect x="0.5" y="0.5" width="8" height="8" fill="#fff" stroke="#444"/><path d="M2 4.5h5M4.5 2v5" stroke="#333" stroke-width="1"/></svg></div><div style="position:absolute;left:203px;top:241px;width:905px;height:25px;background:#fff"></div><div style="position:absolute;left:310px;top:241px;width:80px;height:25px;background:#ffc1cc"></div><div style="position:absolute;left:810px;top:241px;width:80px;height:25px;background:#ff0000"></div><div style="position:absolute;left:203px;top:265px;width:905px;height:1px;background:#dedede"></div><div style="position:absolute;left:209px;top:248px;line-height:0"><svg width="9" height="9" viewBox="0 0 9 9" shape-rendering="crispEdges"><rect x="0.5" y="0.5" width="8" height="8" fill="#fff" stroke="#444"/><path d="M2 4.5h5M4.5 2v5" stroke="#333" stroke-width="1"/></svg></div><div style="position:absolute;left:203px;top:266px;width:905px;height:25px;background:#fff"></div><div style="position:absolute;left:249px;top:266px;width:859px;height:25px;background:#e9eaf9"></div><div style="position:absolute;left:310px;top:266px;width:80px;height:25px;background:#ffc1cc"></div><div style="position:absolute;left:810px;top:266px;width:80px;height:25px;background:#ff0000"></div><div style="position:absolute;left:203px;top:290px;width:905px;height:1px;background:#dedede"></div><div style="position:absolute;left:209px;top:273px;line-height:0"><svg width="9" height="9" viewBox="0 0 9 9" shape-rendering="crispEdges"><rect x="0.5" y="0.5" width="8" height="8" fill="#fff" stroke="#444"/><path d="M2 4.5h5M4.5 2v5" stroke="#333" stroke-width="1"/></svg></div><div style="position:absolute;left:203px;top:291px;width:905px;height:25px;background:#fff"></div><div style="position:absolute;left:310px;top:291px;width:80px;height:25px;background:#ffc1cc"></div><div style="position:absolute;left:810px;top:291px;width:80px;height:25px;background:#ffc1cc"></div><div style="position:absolute;left:203px;top:315px;width:905px;height:1px;background:#dedede"></div><div style="position:absolute;left:209px;top:298px;line-height:0"><svg width="9" height="9" viewBox="0 0 9 9" shape-rendering="crispEdges"><rect x="0.5" y="0.5" width="8" height="8" fill="#fff" stroke="#444"/><path d="M2 4.5h5M4.5 2v5" stroke="#333" stroke-width="1"/></svg></div><div style="position:absolute;left:203px;top:316px;width:905px;height:25px;background:#fff"></div><div style="position:absolute;left:249px;top:316px;width:859px;height:25px;background:#e9eaf9"></div><div style="position:absolute;left:310px;top:316px;width:80px;height:25px;background:#ffc1cc"></div><div style="position:absolute;left:810px;top:316px;width:80px;height:25px;background:#ffc1cc"></div><div style="position:absolute;left:203px;top:340px;width:905px;height:1px;background:#dedede"></div><div style="position:absolute;left:209px;top:323px;line-height:0"><svg width="9" height="9" viewBox="0 0 9 9" shape-rendering="crispEdges"><rect x="0.5" y="0.5" width="8" height="8" fill="#fff" stroke="#444"/><path d="M2 4.5h5M4.5 2v5" stroke="#333" stroke-width="1"/></svg></div><div style="position:absolute;left:203px;top:341px;width:905px;height:25px;background:#fff"></div><div style="position:absolute;left:310px;top:341px;width:80px;height:25px;background:#ffc1cc"></div><div style="position:absolute;left:810px;top:341px;width:80px;height:25px;background:#b8e2ac"></div><div style="position:absolute;left:203px;top:365px;width:905px;height:1px;background:#dedede"></div><div style="position:absolute;left:209px;top:348px;line-height:0"><svg width="9" height="9" viewBox="0 0 9 9" shape-rendering="crispEdges"><rect x="0.5" y="0.5" width="8" height="8" fill="#fff" stroke="#444"/><path d="M2 4.5h5M4.5 2v5" stroke="#333" stroke-width="1"/></svg></div><div style="position:absolute;left:203px;top:366px;width:905px;height:25px;background:#fff"></div><div style="position:absolute;left:249px;top:366px;width:859px;height:25px;background:#e9eaf9"></div><div style="position:absolute;left:310px;top:366px;width:80px;height:25px;background:#ffc1cc"></div><div style="position:absolute;left:810px;top:366px;width:80px;height:25px;background:#ff0000"></div><div style="position:absolute;left:203px;top:390px;width:905px;height:1px;background:#dedede"></div><div style="position:absolute;left:209px;top:373px;line-height:0"><svg width="9" height="9" viewBox="0 0 9 9" shape-rendering="crispEdges"><rect x="0.5" y="0.5" width="8" height="8" fill="#fff" stroke="#444"/><path d="M2 4.5h5M4.5 2v5" stroke="#333" stroke-width="1"/></svg></div><div style="position:absolute;left:203px;top:391px;width:905px;height:25px;background:#fff"></div><div style="position:absolute;left:310px;top:391px;width:80px;height:25px;background:#ffc1cc"></div><div style="position:absolute;left:810px;top:391px;width:80px;height:25px;background:#ff0000"></div><div style="position:absolute;left:203px;top:415px;width:905px;height:1px;background:#dedede"></div><div style="position:absolute;left:209px;top:398px;line-height:0"><svg width="9" height="9" viewBox="0 0 9 9" shape-rendering="crispEdges"><rect x="0.5" y="0.5" width="8" height="8" fill="#fff" stroke="#444"/><path d="M2 4.5h5M4.5 2v5" stroke="#333" stroke-width="1"/></svg></div><div style="position:absolute;left:223px;top:191px;width:1px;height:225px;background:#d9d9d9"></div><div style="position:absolute;left:249px;top:191px;width:1px;height:225px;background:#d9d9d9"></div>
<span style="position:absolute;left:3.54px;top:12.80px;font-size:12px;line-height:16px;font-weight:400;color:#fff;letter-spacing:-0.686px;white-space:pre">RangerSST</span><span style="position:absolute;left:218.64px;top:12.90px;font-size:12px;line-height:16px;font-weight:400;color:#fff;letter-spacing:-0.098px;white-space:pre">Filters</span><span style="position:absolute;left:218.76px;top:44.80px;font-size:12px;line-height:16px;font-weight:400;color:#444;letter-spacing:-0.406px;white-space:pre">This year</span><span style="position:absolute;left:341.38px;top:43.60px;font-size:12px;line-height:16px;font-weight:700;color:#444;letter-spacing:0.238px;white-space:pre">or from</span><span style="position:absolute;left:373.58px;top:72.70px;font-size:12px;line-height:16px;font-weight:700;color:#444;letter-spacing:-0.376px;white-space:pre">to</span><span style="position:absolute;left:502.20px;top:44.80px;font-size:12px;line-height:16px;font-weight:400;color:#777;letter-spacing:-0.205px;white-space:pre">All systems</span><span style="position:absolute;left:502.20px;top:73.60px;font-size:12px;line-height:16px;font-weight:400;color:#777;letter-spacing:0.055px;white-space:pre">All hit types</span><span style="position:absolute;left:692.30px;top:44.70px;font-size:12px;line-height:16px;font-weight:400;color:#777;letter-spacing:-0.103px;white-space:pre">All event IDs</span><span style="position:absolute;left:692.30px;top:73.50px;font-size:12px;line-height:16px;font-weight:400;color:#777;letter-spacing:-0.115px;white-space:pre">All license plates</span><span style="position:absolute;left:1077.94px;top:45.50px;font-size:12px;line-height:16px;font-weight:400;color:#fff;letter-spacing:0.640px;white-space:pre">Run</span><span style="position:absolute;left:1103.62px;top:45.50px;font-size:12px;line-height:16px;font-weight:400;color:#fff;letter-spacing:0.000px;white-space:pre">report</span><span style="position:absolute;left:1078.30px;top:71.60px;font-size:12px;line-height:16px;font-weight:400;color:#fff;letter-spacing:0.391px;white-space:pre">Clea</span><span style="position:absolute;left:1104.42px;top:71.60px;font-size:12px;line-height:16px;font-weight:400;color:#fff;letter-spacing:0.000px;white-space:pre">r</span><span style="position:absolute;left:227.94px;top:121.80px;font-size:12px;line-height:16px;font-weight:400;color:#fff;letter-spacing:-0.441px;white-space:pre">Events</span><span style="position:absolute;left:254.64px;top:146.80px;font-size:12px;line-height:16px;font-weight:400;color:#444;letter-spacing:-0.280px;white-space:pre">Row I...</span><span style="position:absolute;left:316.26px;top:146.80px;font-size:12px;line-height:16px;font-weight:400;color:#444;letter-spacing:-0.461px;white-space:pre">Type</span><span style="position:absolute;left:396.54px;top:146.80px;font-size:12px;line-height:16px;font-weight:400;color:#444;letter-spacing:-0.018px;white-space:pre">Lic plate</span><span style="position:absolute;left:477.34px;top:146.80px;font-size:12px;line-height:16px;font-weight:400;color:#444;letter-spacing:-0.123px;white-space:pre">Lic st</span><span style="position:absolute;left:536.00px;top:146.80px;font-size:12px;line-height:16px;font-weight:400;color:#444;letter-spacing:-0.059px;white-space:pre">Vio ID</span><span style="position:absolute;left:589.44px;top:146.80px;font-size:12px;line-height:16px;font-weight:400;color:#444;letter-spacing:-0.342px;white-space:pre">Ext sys ID</span><span style="position:absolute;left:820.04px;top:146.80px;font-size:12px;line-height:16px;font-weight:400;color:#444;letter-spacing:0.006px;white-space:pre">Proc stat</span><span style="position:absolute;left:901.60px;top:146.80px;font-size:12px;line-height:16px;font-weight:400;color:#444;letter-spacing:-0.126px;white-space:pre">Created</span><span style="position:absolute;left:1042.64px;top:146.80px;font-size:12px;line-height:16px;font-weight:400;color:#444;letter-spacing:-0.037px;white-space:pre">Event time</span><span style="position:absolute;left:202.90px;top:173.70px;font-size:12px;line-height:16px;font-weight:400;color:#444;letter-spacing:-0.170px;white-space:pre">Company: Jason&#x27;s test company (9 events)</span><span style="position:absolute;left:236.08px;top:196.00px;font-size:12px;line-height:16px;font-weight:400;color:#444;letter-spacing:0.000px;white-space:pre">1</span><span style="position:absolute;left:281.12px;top:196.00px;font-size:12px;line-height:16px;font-weight:400;color:#444;letter-spacing:-0.274px;white-space:pre">8825</span><span style="position:absolute;left:314.40px;top:196.00px;font-size:12px;line-height:16px;font-weight:400;color:#2a1f24;letter-spacing:0.006px;white-space:pre">UnauthVeh</span><span style="position:absolute;left:394.50px;top:196.00px;font-size:12px;line-height:16px;font-weight:400;color:#444;letter-spacing:-0.176px;white-space:pre">UNIQD021</span><span style="position:absolute;left:474.50px;top:196.00px;font-size:12px;line-height:16px;font-weight:400;color:#444;letter-spacing:-1.526px;white-space:pre">CO</span><span style="position:absolute;left:551.60px;top:196.00px;font-size:12px;line-height:16px;font-weight:400;color:#444;letter-spacing:-0.480px;white-space:pre">1501</span><span style="position:absolute;left:585.10px;top:196.00px;font-size:12px;line-height:16px;font-weight:400;color:#444;letter-spacing:-0.221px;white-space:pre">2022-05-05T02:53:07</span><span style="position:absolute;left:815.20px;top:196.00px;font-size:12px;line-height:16px;font-weight:400;color:#3a3a3a;letter-spacing:0.684px;white-space:pre">V+I+NM</span><span style="position:absolute;left:894.92px;top:196.00px;font-size:12px;line-height:16px;font-weight:400;color:#444;letter-spacing:-0.050px;white-space:pre">5/5/2022 2:53:07 PM</span><span style="position:absolute;left:1034.82px;top:196.00px;font-size:12px;line-height:16px;font-weight:400;color:#444;letter-spacing:-0.050px;white-space:pre">5/5/2022 2:53:07 PM</span><span style="position:absolute;left:236.08px;top:221.00px;font-size:12px;line-height:16px;font-weight:400;color:#444;letter-spacing:0.000px;white-space:pre">2</span><span style="position:absolute;left:281.12px;top:221.00px;font-size:12px;line-height:16px;font-weight:400;color:#444;letter-spacing:-0.334px;white-space:pre">8824</span><span style="position:absolute;left:314.40px;top:221.00px;font-size:12px;line-height:16px;font-weight:400;color:#2a1f24;letter-spacing:0.006px;white-space:pre">UnauthVeh</span><span style="position:absolute;left:394.50px;top:221.00px;font-size:12px;line-height:16px;font-weight:400;color:#444;letter-spacing:-0.153px;white-space:pre">UNIQD03</span><span style="position:absolute;left:474.50px;top:221.00px;font-size:12px;line-height:16px;font-weight:400;color:#444;letter-spacing:-1.526px;white-space:pre">CO</span><span style="position:absolute;left:551.60px;top:221.00px;font-size:12px;line-height:16px;font-weight:400;color:#444;letter-spacing:-0.520px;white-space:pre">1500</span><span style="position:absolute;left:585.10px;top:221.00px;font-size:12px;line-height:16px;font-weight:400;color:#444;letter-spacing:-0.221px;white-space:pre">2022-05-05T02:27:57</span><span style="position:absolute;left:815.20px;top:221.00px;font-size:12px;line-height:16px;font-weight:400;color:#3a3a3a;letter-spacing:0.684px;white-space:pre">V+I+NM</span><span style="position:absolute;left:894.92px;top:221.00px;font-size:12px;line-height:16px;font-weight:400;color:#444;letter-spacing:-0.050px;white-space:pre">5/5/2022 2:27:57 PM</span><span style="position:absolute;left:1034.82px;top:221.00px;font-size:12px;line-height:16px;font-weight:400;color:#444;letter-spacing:-0.050px;white-space:pre">5/5/2022 2:27:57 PM</span><span style="position:absolute;left:236.02px;top:246.00px;font-size:12px;line-height:16px;font-weight:400;color:#444;letter-spacing:0.000px;white-space:pre">3</span><span style="position:absolute;left:281.12px;top:246.00px;font-size:12px;line-height:16px;font-weight:400;color:#444;letter-spacing:-0.274px;white-space:pre">8823</span><span style="position:absolute;left:314.40px;top:246.00px;font-size:12px;line-height:16px;font-weight:400;color:#2a1f24;letter-spacing:0.006px;white-space:pre">UnauthVeh</span><span style="position:absolute;left:394.50px;top:246.00px;font-size:12px;line-height:16px;font-weight:400;color:#444;letter-spacing:-0.143px;white-space:pre">UNIQD02</span><span style="position:absolute;left:474.50px;top:246.00px;font-size:12px;line-height:16px;font-weight:400;color:#444;letter-spacing:-1.526px;white-space:pre">CO</span><span style="position:absolute;left:585.10px;top:246.00px;font-size:12px;line-height:16px;font-weight:400;color:#444;letter-spacing:-0.221px;white-space:pre">2022-05-05T02:27:37</span><span style="position:absolute;left:814.24px;top:246.00px;font-size:12px;line-height:16px;font-weight:400;color:#fff;letter-spacing:-0.698px;white-space:pre">LPLMFUZZY</span><span style="position:absolute;left:894.92px;top:246.00px;font-size:12px;line-height:16px;font-weight:400;color:#444;letter-spacing:-0.050px;white-space:pre">5/5/2022 2:27:37 PM</span><span style="position:absolute;left:1034.82px;top:246.00px;font-size:12px;line-height:16px;font-weight:400;color:#444;letter-spacing:-0.050px;white-space:pre">5/5/2022 2:27:37 PM</span><span style="position:absolute;left:235.84px;top:271.00px;font-size:12px;line-height:16px;font-weight:400;color:#444;letter-spacing:0.000px;white-space:pre">4</span><span style="position:absolute;left:281.12px;top:271.00px;font-size:12px;line-height:16px;font-weight:400;color:#444;letter-spacing:-0.254px;white-space:pre">8822</span><span style="position:absolute;left:314.40px;top:271.00px;font-size:12px;line-height:16px;font-weight:400;color:#2a1f24;letter-spacing:0.006px;white-space:pre">UnauthVeh</span><span style="position:absolute;left:394.50px;top:271.00px;font-size:12px;line-height:16px;font-weight:400;color:#444;letter-spacing:-0.087px;white-space:pre">UNIQDO2</span><span style="position:absolute;left:474.50px;top:271.00px;font-size:12px;line-height:16px;font-weight:400;color:#444;letter-spacing:-1.526px;white-space:pre">CO</span><span style="position:absolute;left:585.10px;top:271.00px;font-size:12px;line-height:16px;font-weight:400;color:#444;letter-spacing:-0.234px;white-space:pre">2022-05-05T02:26:54</span><span style="position:absolute;left:814.24px;top:271.00px;font-size:12px;line-height:16px;font-weight:400;color:#fff;letter-spacing:-0.698px;white-space:pre">LPLMFUZZY</span><span style="position:absolute;left:894.92px;top:271.00px;font-size:12px;line-height:16px;font-weight:400;color:#444;letter-spacing:-0.050px;white-space:pre">5/5/2022 2:26:54 PM</span><span style="position:absolute;left:1034.82px;top:271.00px;font-size:12px;line-height:16px;font-weight:400;color:#444;letter-spacing:-0.050px;white-space:pre">5/5/2022 2:26:54 PM</span><span style="position:absolute;left:236.02px;top:296.00px;font-size:12px;line-height:16px;font-weight:400;color:#444;letter-spacing:0.000px;white-space:pre">5</span><span style="position:absolute;left:281.12px;top:296.00px;font-size:12px;line-height:16px;font-weight:400;color:#444;letter-spacing:-0.254px;white-space:pre">8821</span><span style="position:absolute;left:314.40px;top:296.00px;font-size:12px;line-height:16px;font-weight:400;color:#2a1f24;letter-spacing:0.006px;white-space:pre">UnauthVeh</span><span style="position:absolute;left:394.50px;top:296.00px;font-size:12px;line-height:16px;font-weight:400;color:#444;letter-spacing:-0.087px;white-space:pre">UNIQDO2</span><span style="position:absolute;left:474.50px;top:296.00px;font-size:12px;line-height:16px;font-weight:400;color:#444;letter-spacing:-1.526px;white-space:pre">CO</span><span style="position:absolute;left:585.10px;top:296.00px;font-size:12px;line-height:16px;font-weight:400;color:#444;letter-spacing:-0.234px;white-space:pre">2022-05-05T02:26:44</span><span style="position:absolute;left:814.24px;top:296.00px;font-size:12px;line-height:16px;font-weight:400;color:#3a3a3a;letter-spacing:-1.038px;white-space:pre">ERRNOLOT</span><span style="position:absolute;left:894.92px;top:296.00px;font-size:12px;line-height:16px;font-weight:400;color:#444;letter-spacing:-0.050px;white-space:pre">5/5/2022 2:26:44 PM</span><span style="position:absolute;left:1034.82px;top:296.00px;font-size:12px;line-height:16px;font-weight:400;color:#444;letter-spacing:-0.050px;white-space:pre">5/5/2022 2:26:44 PM</span><span style="position:absolute;left:236.02px;top:321.00px;font-size:12px;line-height:16px;font-weight:400;color:#444;letter-spacing:0.000px;white-space:pre">6</span><span style="position:absolute;left:281.12px;top:321.00px;font-size:12px;line-height:16px;font-weight:400;color:#444;letter-spacing:-0.294px;white-space:pre">8820</span><span style="position:absolute;left:314.40px;top:321.00px;font-size:12px;line-height:16px;font-weight:400;color:#2a1f24;letter-spacing:0.006px;white-space:pre">UnauthVeh</span><span style="position:absolute;left:394.86px;top:321.00px;font-size:12px;line-height:16px;font-weight:400;color:#444;letter-spacing:-0.460px;white-space:pre">OPO771</span><span style="position:absolute;left:474.50px;top:321.00px;font-size:12px;line-height:16px;font-weight:400;color:#444;letter-spacing:-1.526px;white-space:pre">CO</span><span style="position:absolute;left:585.10px;top:321.00px;font-size:12px;line-height:16px;font-weight:400;color:#444;letter-spacing:-0.174px;white-space:pre">2022-05-05T02:11:45</span><span style="position:absolute;left:814.24px;top:321.00px;font-size:12px;line-height:16px;font-weight:400;color:#3a3a3a;letter-spacing:-1.038px;white-space:pre">ERRNOLOT</span><span style="position:absolute;left:894.92px;top:321.00px;font-size:12px;line-height:16px;font-weight:400;color:#444;letter-spacing:-0.001px;white-space:pre">5/5/2022 2:11:45 PM</span><span style="position:absolute;left:1034.82px;top:321.00px;font-size:12px;line-height:16px;font-weight:400;color:#444;letter-spacing:-0.001px;white-space:pre">5/5/2022 2:11:45 PM</span><span style="position:absolute;left:236.08px;top:346.00px;font-size:12px;line-height:16px;font-weight:400;color:#444;letter-spacing:0.000px;white-space:pre">7</span><span style="position:absolute;left:281.12px;top:346.00px;font-size:12px;line-height:16px;font-weight:400;color:#444;letter-spacing:-0.254px;white-space:pre">8819</span><span style="position:absolute;left:314.40px;top:346.00px;font-size:12px;line-height:16px;font-weight:400;color:#2a1f24;letter-spacing:0.006px;white-space:pre">UnauthVeh</span><span style="position:absolute;left:394.86px;top:346.00px;font-size:12px;line-height:16px;font-weight:400;color:#444;letter-spacing:-0.460px;white-space:pre">OPO771</span><span style="position:absolute;left:474.50px;top:346.00px;font-size:12px;line-height:16px;font-weight:400;color:#444;letter-spacing:-1.526px;white-space:pre">CO</span><span style="position:absolute;left:551.60px;top:346.00px;font-size:12px;line-height:16px;font-weight:400;color:#444;letter-spacing:-0.480px;white-space:pre">1499</span><span style="position:absolute;left:585.10px;top:346.00px;font-size:12px;line-height:16px;font-weight:400;color:#444;letter-spacing:-0.221px;white-space:pre">2022-05-05T02:05:59</span><span style="position:absolute;left:815.20px;top:346.00px;font-size:12px;line-height:16px;font-weight:400;color:#3a3a3a;letter-spacing:0.684px;white-space:pre">V+I+NM</span><span style="position:absolute;left:894.92px;top:346.00px;font-size:12px;line-height:16px;font-weight:400;color:#444;letter-spacing:-0.050px;white-space:pre">5/5/2022 2:05:59 PM</span><span style="position:absolute;left:1034.82px;top:346.00px;font-size:12px;line-height:16px;font-weight:400;color:#444;letter-spacing:-0.050px;white-space:pre">5/5/2022 2:05:59 PM</span><span style="position:absolute;left:236.02px;top:371.00px;font-size:12px;line-height:16px;font-weight:400;color:#444;letter-spacing:0.000px;white-space:pre">8</span><span style="position:absolute;left:281.12px;top:371.00px;font-size:12px;line-height:16px;font-weight:400;color:#444;letter-spacing:-0.274px;white-space:pre">8818</span><span style="position:absolute;left:314.40px;top:371.00px;font-size:12px;line-height:16px;font-weight:400;color:#2a1f24;letter-spacing:0.006px;white-space:pre">UnauthVeh</span><span style="position:absolute;left:394.44px;top:371.00px;font-size:12px;line-height:16px;font-weight:400;color:#444;letter-spacing:-0.442px;white-space:pre">DPZ771</span><span style="position:absolute;left:474.50px;top:371.00px;font-size:12px;line-height:16px;font-weight:400;color:#444;letter-spacing:-1.526px;white-space:pre">CO</span><span style="position:absolute;left:585.10px;top:371.00px;font-size:12px;line-height:16px;font-weight:400;color:#444;letter-spacing:-0.221px;white-space:pre">2022-05-05T02:01:19</span><span style="position:absolute;left:814.24px;top:371.00px;font-size:12px;line-height:16px;font-weight:400;color:#fff;letter-spacing:-0.698px;white-space:pre">LPLMFUZZY</span><span style="position:absolute;left:894.92px;top:371.00px;font-size:12px;line-height:16px;font-weight:400;color:#444;letter-spacing:-0.050px;white-space:pre">5/5/2022 2:01:19 PM</span><span style="position:absolute;left:1034.82px;top:371.00px;font-size:12px;line-height:16px;font-weight:400;color:#444;letter-spacing:-0.050px;white-space:pre">5/5/2022 2:01:19 PM</span><span style="position:absolute;left:236.08px;top:396.00px;font-size:12px;line-height:16px;font-weight:400;color:#444;letter-spacing:0.000px;white-space:pre">9</span><span style="position:absolute;left:281.12px;top:396.00px;font-size:12px;line-height:16px;font-weight:400;color:#444;letter-spacing:-0.254px;white-space:pre">8817</span><span style="position:absolute;left:314.40px;top:396.00px;font-size:12px;line-height:16px;font-weight:400;color:#2a1f24;letter-spacing:0.006px;white-space:pre">UnauthVeh</span><span style="position:absolute;left:394.92px;top:396.00px;font-size:12px;line-height:16px;font-weight:400;color:#444;letter-spacing:-0.471px;white-space:pre">571VZB</span><span style="position:absolute;left:474.50px;top:396.00px;font-size:12px;line-height:16px;font-weight:400;color:#444;letter-spacing:-1.526px;white-space:pre">CO</span><span style="position:absolute;left:585.10px;top:396.00px;font-size:12px;line-height:16px;font-weight:400;color:#444;letter-spacing:-0.224px;white-space:pre">2022-05-05T01:58:55</span><span style="position:absolute;left:814.24px;top:396.00px;font-size:12px;line-height:16px;font-weight:400;color:#fff;letter-spacing:-0.417px;white-space:pre">LPLM</span><span style="position:absolute;left:894.92px;top:396.00px;font-size:12px;line-height:16px;font-weight:400;color:#444;letter-spacing:-0.050px;white-space:pre">5/5/2022 1:58:55 PM</span><span style="position:absolute;left:1034.82px;top:396.00px;font-size:12px;line-height:16px;font-weight:400;color:#444;letter-spacing:-0.050px;white-space:pre">5/5/2022 1:58:55 PM</span>
</div></body></html>
